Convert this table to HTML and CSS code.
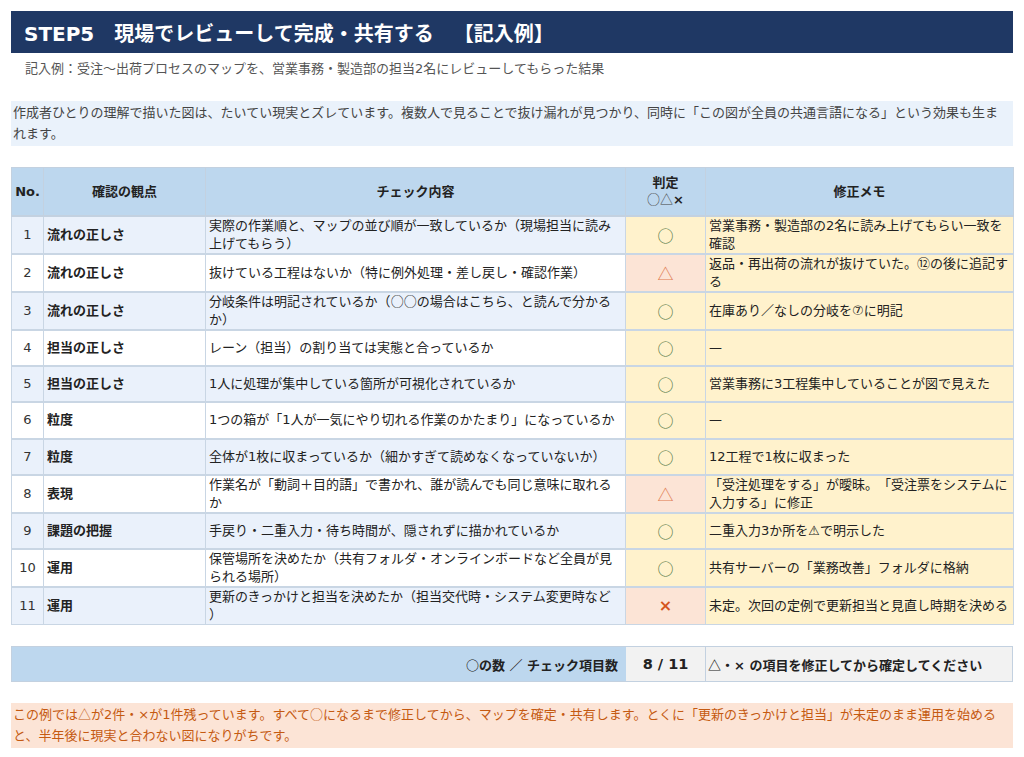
FILE: index.html
```html
<!DOCTYPE html>
<html lang="ja">
<head>
<meta charset="utf-8">
<title>STEP5 現場でレビューして完成・共有する 【記入例】</title>
<link rel="stylesheet" href="styles.css">
</head>
<body>
<div class="page">
  <header class="title-bar"><h1>STEP5　現場でレビューして完成・共有する　【記入例】</h1></header>
  <p class="subtitle">記入例：受注〜出荷プロセスのマップを、営業事務・製造部の担当2名にレビューしてもらった結果</p>
  <div class="intro">作成者ひとりの理解で描いた図は、たいてい現実とズレています。複数人で見ることで抜け漏れが見つかり、同時に「この図が全員の共通言語になる」という効果も生まれます。</div>

  <table class="check">
    <colgroup>
      <col class="c-no"><col class="c-view"><col class="c-item"><col class="c-judge"><col class="c-memo">
    </colgroup>
    <thead>
      <tr>
        <th>No.</th>
        <th>確認の観点</th>
        <th>チェック内容</th>
        <th>判定<br><span class="marks"><span class="cjk">○△</span><b>×</b></span></th>
        <th>修正メモ</th>
      </tr>
    </thead>
    <tbody>
      <tr class="odd"><td class="no">1</td><td class="view">流れの正しさ</td><td class="item">実際の作業順と、マップの並び順が一致しているか（現場担当に読み上げてもらう）</td><td class="judge ok">○</td><td class="memo">営業事務・製造部の2名に読み上げてもらい一致を確認</td></tr>
      <tr><td class="no">2</td><td class="view">流れの正しさ</td><td class="item">抜けている工程はないか（特に例外処理・差し戻し・確認作業）</td><td class="judge warn">△</td><td class="memo">返品・再出荷の流れが抜けていた。⑫の後に追記する</td></tr>
      <tr class="odd"><td class="no">3</td><td class="view">流れの正しさ</td><td class="item">分岐条件は明記されているか（<span class="cjk">○○</span>の場合はこちら、と読んで分かるか）</td><td class="judge ok">○</td><td class="memo">在庫あり／なしの分岐を⑦に明記</td></tr>
      <tr><td class="no">4</td><td class="view">担当の正しさ</td><td class="item">レーン（担当）の割り当ては実態と合っているか</td><td class="judge ok">○</td><td class="memo">—</td></tr>
      <tr class="odd"><td class="no">5</td><td class="view">担当の正しさ</td><td class="item">1人に処理が集中している箇所が可視化されているか</td><td class="judge ok">○</td><td class="memo">営業事務に3工程集中していることが図で見えた</td></tr>
      <tr><td class="no">6</td><td class="view">粒度</td><td class="item">1つの箱が「1人が一気にやり切れる作業のかたまり」になっているか</td><td class="judge ok">○</td><td class="memo">—</td></tr>
      <tr class="odd"><td class="no">7</td><td class="view">粒度</td><td class="item">全体が1枚に収まっているか（細かすぎて読めなくなっていないか）</td><td class="judge ok">○</td><td class="memo">12工程で1枚に収まった</td></tr>
      <tr><td class="no">8</td><td class="view">表現</td><td class="item">作業名が「動詞＋目的語」で書かれ、誰が読んでも同じ意味に取れるか</td><td class="judge warn">△</td><td class="memo">「受注処理をする」が曖昧。「受注票をシステムに入力する」に修正</td></tr>
      <tr class="odd"><td class="no">9</td><td class="view">課題の把握</td><td class="item">手戻り・二重入力・待ち時間が、隠されずに描かれているか</td><td class="judge ok">○</td><td class="memo">二重入力3か所を⚠で明示した</td></tr>
      <tr><td class="no">10</td><td class="view">運用</td><td class="item">保管場所を決めたか（共有フォルダ・オンラインボードなど全員が見られる場所）</td><td class="judge ok">○</td><td class="memo">共有サーバーの「業務改善」フォルダに格納</td></tr>
      <tr class="odd"><td class="no">11</td><td class="view">運用</td><td class="item">更新のきっかけと担当を決めたか（担当交代時・システム変更時など）</td><td class="judge ng">×</td><td class="memo">未定。次回の定例で更新担当と見直し時期を決める</td></tr>
    </tbody>
  </table>

  <div class="summary">
    <div class="sum-label"><span class="cjk">○</span>の数 ／ チェック項目数</div>
    <div class="sum-value">8 / 11</div>
    <div class="sum-note"><span class="cjk">△</span>・× の項目を修正してから確定してください</div>
  </div>

  <div class="footnote">この例では<span class="cjk">△</span>が2件・×が1件残っています。すべて<span class="cjk">○</span>になるまで修正してから、マップを確定・共有します。とくに「更新のきっかけと担当」が未定のまま運用を始めると、半年後に現実と合わない図になりがちです。</div>
</div>
</body>
</html>
```

FILE: styles.css
```css
* { box-sizing: border-box; }

html, body {
  margin: 0;
  padding: 0;
  background: #ffffff;
}

body {
  font-family: "DejaVu Sans", "Noto Sans CJK JP", sans-serif;
  color: #222222;
  font-size: 13px;
  text-spacing-trim: space-all;
}

.cjk {
  font-family: "Noto Sans CJK JP", sans-serif;
  line-height: 1;
}

.page {
  width: 1024px;
  padding: 11px 11px 0 11px;
}

.title-bar {
  background: #1f3864;
  height: 42px;
  display: flex;
  align-items: center;
  padding-left: 13px;
}

.title-bar h1 {
  margin: 0;
  color: #ffffff;
  font-size: 20px;
  font-weight: 700;
}

.subtitle {
  margin: 0;
  padding: 6px 0 0 14px;
  height: 37px;
  color: #555555;
  font-size: 13px;
  line-height: 20px;
}

.intro {
  margin-top: 11px;
  background: #eaf2fb;
  color: #444444;
  font-size: 13px;
  line-height: 21px;
  padding: 1px 14px 2px 2px;
}

.check {
  margin-top: 21px;
  width: 1002px;
  table-layout: fixed;
  border-collapse: collapse;
  border: 1px solid #c3d1e0;
}

.c-no { width: 32px; }
.c-view { width: 162px; }
.c-item { width: 420px; }
.c-judge { width: 80px; }
.c-memo { width: 308px; }

.check th {
  background: #bdd7ee;
  height: 48px;
  font-weight: 700;
  font-size: 13px;
  line-height: 17px;
  color: #222222;
  border: 1px solid #c3d1e0;
  border-bottom: 2px solid #c3d1e0;
  padding: 0 2px;
  text-align: center;
}

.check th .marks {
  font-weight: 400;
  color: #444444;
}

.check th .marks b {
  font-weight: 700;
  color: #222222;
}

.check td {
  height: 36.4px;
  border: 1px solid #c9d6e4;
  border-top-width: 2px;
  padding: 0 3px;
  line-height: 18px;
  vertical-align: middle;
  font-size: 13px;
  color: #222222;
  background: #ffffff;
}

.check tr.odd td.no,
.check tr.odd td.view,
.check tr.odd td.item {
  background: #eaf1fb;
}

.check td.no {
  text-align: center;
  padding: 0;
  color: #333333;
}

.check td.view {
  font-weight: 700;
}

.check td.item {
  line-break: anywhere;
}

.check td.judge {
  text-align: center;
  font-family: "Noto Sans CJK JP", sans-serif;
  font-size: 16px;
  background: #fff2cc;
}

.check td.judge.ok { color: #4f7440; }
.check td.judge.warn { color: #e07a50; background: #fce4d6; }
.check td.judge.ng {
  font-family: "DejaVu Sans", sans-serif;
  color: #d5561c;
  background: #fce4d6;
  font-size: 16px;
  font-weight: 700;
}

.check td.memo {
  background: #fff2cc;
}

.summary {
  margin-top: 21px;
  display: grid;
  grid-template-columns: 614px 80px 1fr;
  height: 36px;
  border: 1px solid #c3d1e0;
}

.sum-label {
  background: #bdd7ee;
  display: flex;
  align-items: center;
  justify-content: flex-end;
  padding-right: 8px;
  font-weight: 700;
  font-size: 13px;
}

.sum-value {
  background: #f2f2f2;
  display: flex;
  align-items: center;
  justify-content: center;
  font-weight: 700;
  font-size: 14.5px;
  border-right: 1px solid #c3d1e0;
}

.sum-note {
  background: #f2f2f2;
  display: flex;
  align-items: center;
  padding-left: 2px;
  font-weight: 700;
  font-size: 13px;
}

.footnote {
  margin-top: 21px;
  background: #fce4d6;
  color: #c55a11;
  font-size: 13px;
  line-height: 21px;
  padding: 1px 14px 2px 2px;
}
```
